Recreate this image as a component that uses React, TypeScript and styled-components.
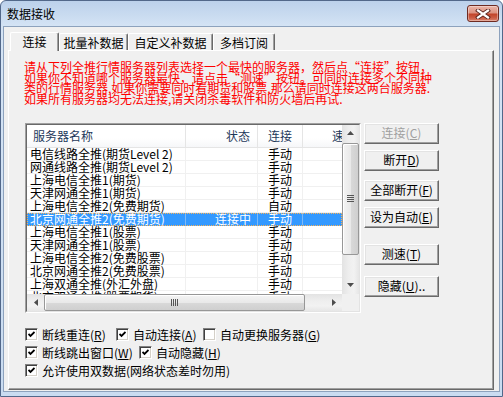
import React from "react";
import styled, { createGlobalStyle } from "styled-components";

const FONT = `"Noto Sans CJK SC", "Liberation Sans", sans-serif`;

const GlobalStyle = createGlobalStyle`
  html, body {
    margin: 0;
    padding: 0;
    background: #ffffff;
  }
  body {
    font-family: ${FONT};
    font-size: 12px;
    color: #000;
  }
  * {
    box-sizing: border-box;
  }
`;

const Window = styled.div`
  width: 503px;
  height: 397px;
  border: 1px solid #52688a;
  border-radius: 6px 6px 0 0;
  background: linear-gradient(180deg, #bcd1eb 0px, #c9dbf0 14px, #d5e4f5 26px, #cadcf1 100%);
  display: flex;
  flex-direction: column;
  overflow: hidden;
`;

const TitleBar = styled.div`
  height: 25px;
  flex: none;
  display: flex;
  justify-content: space-between;
  align-items: flex-start;
  padding: 0 3px 0 6px;
`;

const Title = styled.span`
  margin-top: 5px;
  font-size: 12px;
  line-height: 15px;
  color: #000;
`;

const CloseButton = styled.div`
  margin-top: 4px;
  width: 32px;
  height: 17px;
  border: 1px solid #6e2b22;
  border-radius: 3px;
  background: linear-gradient(180deg, #ebb5a8 0%, #dc9280 46%, #c2442a 54%, #cb5b42 78%, #d9826c 100%);
  box-shadow: inset 0 0 0 1px rgba(255, 255, 255, 0.35);
  display: flex;
  align-items: center;
  justify-content: center;
`;

const FrameBody = styled.div`
  flex: 1;
  display: flex;
  padding: 0 2px 4px 2px;
`;

const Client = styled.div`
  flex: 1;
  display: flex;
  flex-direction: column;
  background: #f0f0f0;
  border: 1px solid #8da2bd;
  padding: 5px 5px 1px 4px;
`;

const TabStrip = styled.div`
  height: 18px;
  flex: none;
  display: flex;
  align-items: flex-end;
  padding-left: 2px;
  position: relative;
  z-index: 1;
`;

const Tab = styled.div<{ $w: number; $active?: boolean }>`
  width: ${(p) => p.$w}px;
  height: ${(p) => (p.$active ? 19 : 17)}px;
  margin-bottom: ${(p) => (p.$active ? -1 : 0)}px;
  background: #f0f0f0;
  border: 1px solid;
  border-color: #ffffff #696969 transparent #ffffff;
  border-bottom: none;
  border-radius: 2px 2px 0 0;
  box-shadow: inset -1px 0 #a0a0a0;
  display: flex;
  align-items: center;
  justify-content: center;
  font-size: 12px;
  line-height: 14px;
  padding-top: ${(p) => (p.$active ? 0 : 1)}px;
`;

const Panel = styled.div`
  flex: 1;
  border: 1px solid;
  border-color: #ffffff #696969 #696969 #ffffff;
  box-shadow: inset -1px -1px #a0a0a0;
  padding: 11px 0 0 15px;
  display: flex;
  flex-direction: column;
`;

const Notice = styled.div`
  color: #ff0000;
  font-size: 12px;
  line-height: 10.7px;
`;

const NoticeLine = styled.div`
  white-space: nowrap;
  height: 10.7px;
`;

const MainRow = styled.div`
  display: flex;
  align-items: flex-start;
  margin-top: 18px;
`;

const ListFrame = styled.div`
  margin-left: 1px;
  width: 336px;
  height: 190px;
  border: 1px solid;
  border-color: #a0a0a0 #ffffff #ffffff #a0a0a0;
`;

const ListInner = styled.div`
  width: 100%;
  height: 100%;
  border: 1px solid;
  border-color: #696969 #e3e3e3 #e3e3e3 #696969;
  display: grid;
  grid-template-columns: 315px 17px;
  grid-template-rows: 169px 17px;
`;

const ListContent = styled.div`
  background: #ffffff;
  overflow: hidden;
`;

const HeaderRow = styled.div`
  display: flex;
  height: 23px;
  border-bottom: 1px solid #e5e5e5;
  background: linear-gradient(180deg, #ffffff, #ffffff 60%, #f6f7f9);
`;

const HeaderCell = styled.div<{ $w: number; $align: string; $pad?: number }>`
  flex: none;
  width: ${(p) => p.$w}px;
  border-right: 1px solid #e5e5e5;
  display: flex;
  align-items: center;
  justify-content: ${(p) => p.$align};
  padding: 0 ${(p) => p.$pad ?? 6}px;
  font-size: 12px;
  color: #1e395b;
  white-space: nowrap;
`;

const Row = styled.div<{ $selected?: boolean }>`
  display: flex;
  height: 13px;
  border-bottom: 1px solid ${(p) => (p.$selected ? "#3399ff" : "#f0f0f0")};
  background: ${(p) => (p.$selected ? "#3399ff" : "#ffffff")};
  color: ${(p) => (p.$selected ? "#ffffff" : "#000000")};
  outline: ${(p) => (p.$selected ? "1px dotted #f7b35a" : "none")};
  outline-offset: -1px;
`;

const Cell = styled.div<{ $w: number; $align: string; $pad?: number; $selected?: boolean }>`
  flex: none;
  width: ${(p) => p.$w}px;
  border-right: 1px solid ${(p) => (p.$selected ? "#7db9f7" : "#f0f0f0")};
  text-align: ${(p) => p.$align};
  padding: 0 ${(p) => p.$pad ?? 3}px;
  font-size: 12px;
  line-height: 12px;
  white-space: nowrap;
`;

const VScroll = styled.div`
  display: flex;
  flex-direction: column;
  background: linear-gradient(90deg, #e3e3e3, #eeeeee 40%, #f2f2f2 70%, #e6e6e6);
`;

const HScroll = styled.div`
  display: flex;
  background: linear-gradient(180deg, #e3e3e3, #eeeeee 40%, #f2f2f2 70%, #e6e6e6);
`;

const ArrowBox = styled.div`
  flex: none;
  width: 17px;
  height: 17px;
  display: flex;
  align-items: center;
  justify-content: center;
`;

const Track = styled.div`
  flex: 1;
  display: flex;
`;

const VThumb = styled.div`
  margin-top: 1px;
  width: 17px;
  height: 112px;
  border: 1px solid #979797;
  border-radius: 2px;
  background: linear-gradient(90deg, #f4f4f4, #e9e9e9 50%, #d9d9d9 52%, #cfcfcf);
  box-shadow: inset 1px 1px #ffffff;
  display: flex;
  align-items: center;
  justify-content: center;
`;

const HThumb = styled.div`
  width: 261px;
  height: 17px;
  border: 1px solid #979797;
  border-radius: 2px;
  background: linear-gradient(180deg, #f4f4f4, #e9e9e9 50%, #d9d9d9 52%, #cfcfcf);
  box-shadow: inset 1px 1px #ffffff;
  display: flex;
  align-items: center;
  justify-content: center;
`;

const Corner = styled.div`
  background: #f0f0f0;
`;

const ButtonColumn = styled.div`
  margin-left: 3px;
  width: 75px;
  display: flex;
  flex-direction: column;
`;

const PushButton = styled.div<{ $top: number; $disabled?: boolean }>`
  margin-top: ${(p) => p.$top}px;
  height: 21px;
  border: 1px solid;
  border-color: #ffffff #696969 #696969 #ffffff;
  box-shadow: inset -1px -1px #a0a0a0, inset 1px 1px #e3e3e3;
  background: #f0f0f0;
  color: ${(p) => (p.$disabled ? "#a0a0a0" : "#000000")};
  display: flex;
  align-items: center;
  justify-content: center;
  font-size: 12px;
  line-height: 14px;
  white-space: nowrap;
`;

const Key = styled.span`
  text-decoration: underline;
  text-underline-offset: 1px;
`;

const Options = styled.div`
  margin-top: 13px;
  display: flex;
  flex-direction: column;
`;

const OptionRow = styled.div`
  display: flex;
  align-items: center;
  height: 18px;
  padding-left: 1px;
`;

const Option = styled.label<{ $w?: number }>`
  display: flex;
  align-items: center;
  gap: 4px;
  flex: none;
  width: ${(p) => (p.$w ? `${p.$w}px` : "auto")};
  font-size: 12px;
  line-height: 14px;
  white-space: nowrap;
`;

const CheckBox = styled.span`
  flex: none;
  width: 13px;
  height: 13px;
  border: 1px solid;
  border-color: #808080 #ffffff #ffffff #808080;
  box-shadow: inset 1px 1px #404040, inset -1px -1px #d4d0c8;
  background: #ffffff;
  display: flex;
  align-items: center;
  justify-content: center;
`;

const ArrowUp = () => (
  <svg width="7" height="4" viewBox="0 0 7 4">
    <path d="M0 4 L3.5 0 L7 4 Z" fill="#4d4d4d" />
  </svg>
);

const ArrowDown = () => (
  <svg width="7" height="4" viewBox="0 0 7 4">
    <path d="M0 0 L3.5 4 L7 0 Z" fill="#4d4d4d" />
  </svg>
);

const ArrowLeft = () => (
  <svg width="4" height="7" viewBox="0 0 4 7">
    <path d="M4 0 L0 3.5 L4 7 Z" fill="#4d4d4d" />
  </svg>
);

const ArrowRight = () => (
  <svg width="4" height="7" viewBox="0 0 4 7">
    <path d="M0 0 L4 3.5 L0 7 Z" fill="#4d4d4d" />
  </svg>
);

const GripV = () => (
  <svg width="7" height="7" viewBox="0 0 7 7">
    {[0, 2, 4, 6].map((y) => (
      <rect key={y} x="0" y={y} width="7" height="1" fill="#555" />
    ))}
  </svg>
);

const GripH = () => (
  <svg width="7" height="7" viewBox="0 0 7 7">
    {[0, 2, 4, 6].map((x) => (
      <rect key={x} x={x} y="0" width="1" height="7" fill="#555" />
    ))}
  </svg>
);

const CheckMark = () => (
  <svg width="7" height="7" viewBox="0 0 7 7">
    <path d="M0.5 3 L2.5 5 L6.5 1" stroke="#000" strokeWidth="1.8" fill="none" />
  </svg>
);

const CloseGlyph = () => (
  <svg width="16" height="10" viewBox="0 0 16 10">
    <path d="M3 1.5 L13 8.5 M13 1.5 L3 8.5" stroke="#5a2620" strokeWidth="4" strokeLinecap="square" />
    <path d="M3 1.5 L13 8.5 M13 1.5 L3 8.5" stroke="#ffffff" strokeWidth="2.2" strokeLinecap="square" />
  </svg>
);

const columns = { name: 159, status: 72, link: 45, speed: 60 };

type Server = { name: string; status?: string; link: string; selected?: boolean };

const servers: Server[] = [
  { name: "电信线路全推(期货Level 2)", link: "手动" },
  { name: "网通线路全推(期货Level 2)", link: "手动" },
  { name: "上海电信全推1(期货)", link: "手动" },
  { name: "天津网通全推1(期货)", link: "手动" },
  { name: "上海电信全推2(免费期货)", link: "自动" },
  { name: "北京网通全推2(免费期货)", status: "连接中", link: "手动", selected: true },
  { name: "上海电信全推1(股票)", link: "手动" },
  { name: "天津网通全推1(股票)", link: "手动" },
  { name: "上海电信全推2(免费股票)", link: "手动" },
  { name: "北京网通全推2(免费股票)", link: "手动" },
  { name: "上海双通全推(外汇外盘)", link: "手动" },
  { name: "北京双通全推(股票期货)", link: "手动" },
];

const notice = [
  "请从下列全推行情服务器列表选择一个最快的服务器，然后点“连接”按钮，",
  "如果你不知道哪个服务器最快，请点击“测速”按钮。可同时连接多个不同种",
  "类的行情服务器,如果你需要同时看期货和股票,那么请同时连接这两台服务器.",
  "如果所有服务器均无法连接,请关闭杀毒软件和防火墙后再试.",
];

function Check({ on, label, k, w }: { on: boolean; label: string; k: string; w?: number }) {
  return (
    <Option $w={w}>
      <CheckBox>{on && <CheckMark />}</CheckBox>
      <span>
        {label}(<Key>{k}</Key>)
      </span>
    </Option>
  );
}

export default function App() {
  return (
    <>
      <GlobalStyle />
      <Window>
        <TitleBar>
          <Title>数据接收</Title>
          <CloseButton>
            <CloseGlyph />
          </CloseButton>
        </TitleBar>
        <FrameBody>
          <Client>
            <TabStrip>
              <Tab $w={49} $active>连接</Tab>
              <Tab $w={69}>批量补数据</Tab>
              <Tab $w={85}>自定义补数据</Tab>
              <Tab $w={62}>多档订阅</Tab>
            </TabStrip>
            <Panel>
              <Notice>
                {notice.map((line) => (
                  <NoticeLine key={line}>{line}</NoticeLine>
                ))}
              </Notice>
              <MainRow>
                <ListFrame>
                  <ListInner>
                    <ListContent>
                      <HeaderRow>
                        <HeaderCell $w={columns.name} $align="flex-start">服务器名称</HeaderCell>
                        <HeaderCell $w={columns.status} $align="flex-end" $pad={7}>状态</HeaderCell>
                        <HeaderCell $w={columns.link} $align="center" $pad={0}>连接</HeaderCell>
                        <HeaderCell $w={columns.speed} $align="flex-end">速度</HeaderCell>
                      </HeaderRow>
                      {servers.map((s) => (
                        <Row key={s.name} $selected={s.selected}>
                          <Cell $w={columns.name} $align="left" $selected={s.selected}>{s.name}</Cell>
                          <Cell $w={columns.status} $align="right" $pad={6} $selected={s.selected}>
                            {s.status ?? ""}
                          </Cell>
                          <Cell $w={columns.link} $align="center" $pad={0} $selected={s.selected}>
                            {s.link}
                          </Cell>
                          <Cell $w={columns.speed} $align="right" $selected={s.selected} />
                        </Row>
                      ))}
                    </ListContent>
                    <VScroll>
                      <ArrowBox>
                        <ArrowUp />
                      </ArrowBox>
                      <Track>
                        <VThumb>
                          <GripV />
                        </VThumb>
                      </Track>
                      <ArrowBox>
                        <ArrowDown />
                      </ArrowBox>
                    </VScroll>
                    <HScroll>
                      <ArrowBox>
                        <ArrowLeft />
                      </ArrowBox>
                      <Track>
                        <HThumb>
                          <GripH />
                        </HThumb>
                      </Track>
                      <ArrowBox>
                        <ArrowRight />
                      </ArrowBox>
                    </HScroll>
                    <Corner />
                  </ListInner>
                </ListFrame>
                <ButtonColumn>
                  <PushButton $top={0} $disabled>连接(<Key>C</Key>)</PushButton>
                  <PushButton $top={6}>断开<Key>D</Key>)</PushButton>
                  <PushButton $top={9}>全部断开(<Key>F</Key>)</PushButton>
                  <PushButton $top={6}>设为自动(<Key>E</Key>)</PushButton>
                  <PushButton $top={16}>测速(<Key>T</Key>)</PushButton>
                  <PushButton $top={11}>隐藏(<Key>U</Key>)..</PushButton>
                </ButtonColumn>
              </MainRow>
              <Options>
                <OptionRow>
                  <Check on label="断线重连" k="R" w={91} />
                  <Check on label="自动连接" k="A" w={87} />
                  <Check on={false} label="自动更换服务器" k="G" />
                </OptionRow>
                <OptionRow>
                  <Check on label="断线跳出窗口" k="W" w={114} />
                  <Check on label="自动隐藏" k="H" />
                </OptionRow>
                <OptionRow>
                  <Option>
                    <CheckBox>
                      <CheckMark />
                    </CheckBox>
                    <span>允许使用双数据(网络状态差时勿用)</span>
                  </Option>
                </OptionRow>
              </Options>
            </Panel>
          </Client>
        </FrameBody>
      </Window>
    </>
  );
}
